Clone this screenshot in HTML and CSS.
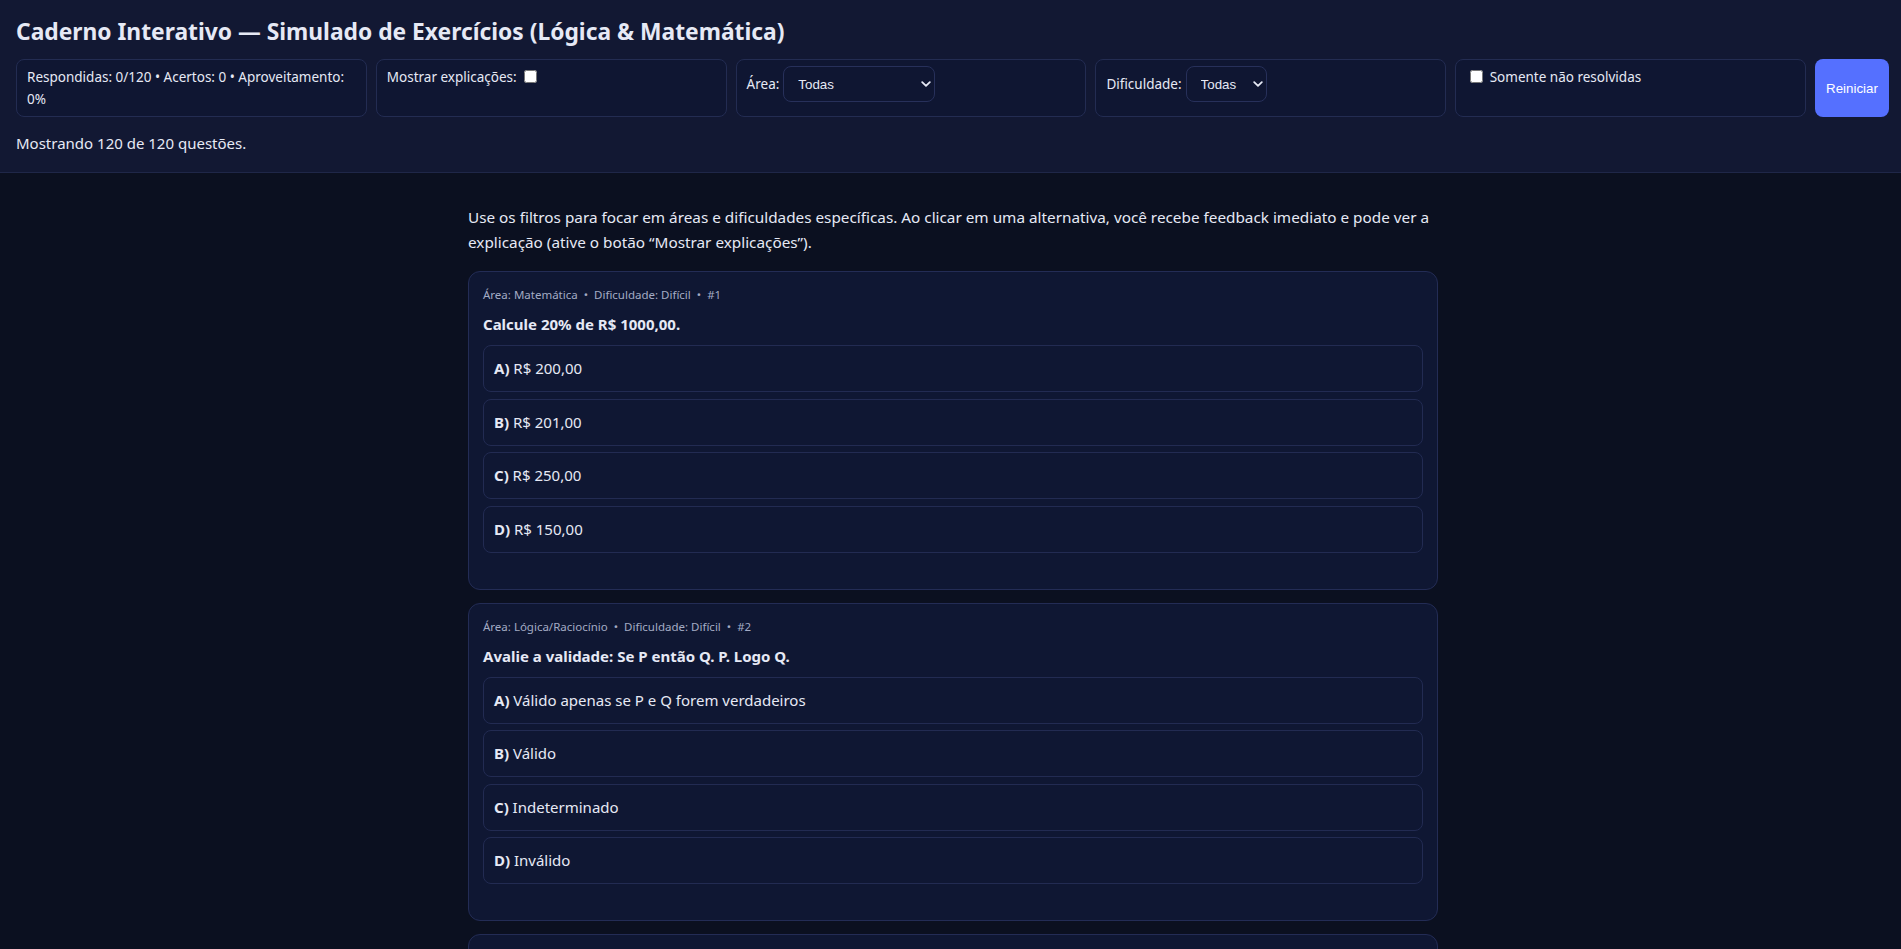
FILE: index.html
```html
<!DOCTYPE html>
<html lang="pt-BR">
<head>
<meta charset="utf-8">
<title>Caderno Interativo</title>
<link rel="stylesheet" href="styles.css">
</head>
<body>
<header class="topbar">
  <h1 class="title">Caderno Interativo — Simulado de Exercícios (Lógica &amp; Matemática)</h1>
  <div class="controls">
    <div class="ctrl">Respondidas: 0/120 • Acertos: 0 • Aproveitamento: 0%</div>
    <label class="ctrl">Mostrar explicações: <input type="checkbox" class="chk"></label>
    <div class="ctrl">
      <div class="field">
        <label for="area">Área:</label>
        <span class="select-wrap">
          <select id="area" class="select sel-area">
            <option>Todas</option>
            <option>Matemática</option>
            <option>Lógica/Raciocínio</option>
          </select>
          <svg class="chev" width="10" height="6" viewBox="0 0 10 6"><path d="M1.2 1.2 L5 4.8 L8.8 1.2" fill="none" stroke="currentColor" stroke-width="1.8" stroke-linecap="round" stroke-linejoin="round"/></svg>
        </span>
      </div>
    </div>
    <div class="ctrl">
      <div class="field">
        <label for="dif">Dificuldade:</label>
        <span class="select-wrap">
          <select id="dif" class="select sel-diff">
            <option>Todas</option>
            <option>Fácil</option>
            <option>Média</option>
            <option>Difícil</option>
          </select>
          <svg class="chev" width="10" height="6" viewBox="0 0 10 6"><path d="M1.2 1.2 L5 4.8 L8.8 1.2" fill="none" stroke="currentColor" stroke-width="1.8" stroke-linecap="round" stroke-linejoin="round"/></svg>
        </span>
      </div>
    </div>
    <label class="ctrl"><input type="checkbox" class="chk chk-first"> Somente não resolvidas</label>
    <button class="reset" type="button">Reiniciar</button>
  </div>
  <div class="count">Mostrando 120 de 120 questões.</div>
</header>

<main class="main">
  <div class="wrap">
    <p class="intro">Use os filtros para focar em áreas e dificuldades específicas. Ao clicar em uma alternativa, você recebe feedback imediato e pode ver a explicação (ative o botão “Mostrar explicações”).</p>

    <section class="card">
      <div class="meta">Área: Matemática<span class="sep">•</span>Dificuldade: Difícil<span class="sep">•</span>#1</div>
      <div class="q">Calcule 20% de R$ 1000,00.</div>
      <div class="opts">
        <div class="opt"><b>A)</b> R$ 200,00</div>
        <div class="opt"><b>B)</b> R$ 201,00</div>
        <div class="opt"><b>C)</b> R$ 250,00</div>
        <div class="opt"><b>D)</b> R$ 150,00</div>
      </div>
      <div class="feedback"></div>
    </section>

    <section class="card">
      <div class="meta">Área: Lógica/Raciocínio<span class="sep">•</span>Dificuldade: Difícil<span class="sep">•</span>#2</div>
      <div class="q">Avalie a validade: Se P então Q. P. Logo Q.</div>
      <div class="opts">
        <div class="opt"><b>A)</b> Válido apenas se P e Q forem verdadeiros</div>
        <div class="opt"><b>B)</b> Válido</div>
        <div class="opt"><b>C)</b> Indeterminado</div>
        <div class="opt"><b>D)</b> Inválido</div>
      </div>
      <div class="feedback"></div>
    </section>

    <section class="card">
      <div class="meta">Área: Matemática<span class="sep">•</span>Dificuldade: Média<span class="sep">•</span>#3</div>
      <div class="q">Qual é o próximo termo da sequência 2, 4, 8, 16, ...?</div>
      <div class="opts">
        <div class="opt"><b>A)</b> 24</div>
        <div class="opt"><b>B)</b> 32</div>
        <div class="opt"><b>C)</b> 30</div>
        <div class="opt"><b>D)</b> 20</div>
      </div>
      <div class="feedback"></div>
    </section>
  </div>
</main>
</body>
</html>
```

FILE: styles.css
```css
* { box-sizing: border-box; }

body {
  margin: 0;
  background: #0b1020;
  color: #e6e9f5;
  font-family: "Noto Sans", "Open Sans", sans-serif;
}

.topbar {
  background: #121833;
  border-bottom: 1px solid #1f2748;
  padding: 18px 12px 17px 16px;
}

.title {
  margin: 0;
  font-size: 22.8px;
  line-height: 28px;
  font-weight: 700;
}

.controls {
  display: grid;
  grid-template-columns: repeat(5, minmax(0, 1fr)) auto;
  gap: 9px;
  margin-top: 13px;
}

.ctrl {
  display: block;
  background: #0f1632;
  border: 1px solid #232c52;
  border-radius: 8px;
  padding: 6px 10px;
  font-size: 13.5px;
  line-height: 22px;
}

.chk {
  width: 13px;
  height: 13px;
  margin: 0 3px 0 4px;
  vertical-align: -1px;
}

.chk-first { margin-left: 4px; }

.field {
  display: flex;
  align-items: center;
  gap: 4px;
}

.select-wrap {
  position: relative;
  display: inline-block;
  color: #e6e9f5;
}

.select {
  -webkit-appearance: none;
  appearance: none;
  height: 36px;
  background: #0f1632;
  color: #e6e9f5;
  border: 1px solid #27305a;
  border-radius: 8px;
  padding: 0 20px 0 14px;
  font-family: "Liberation Sans", Arial, sans-serif;
  font-size: 13.333px;
}

.sel-area { width: 152px; }
.sel-diff { width: 81px; }

.chev {
  position: absolute;
  right: 4px;
  top: 15px;
  pointer-events: none;
}

.reset {
  background: #5570ff;
  color: #ffffff;
  border: 0;
  border-radius: 8px;
  padding: 0 10px;
  width: 74px;
  font-family: "Liberation Sans", Arial, sans-serif;
  font-size: 13.333px;
}

.count {
  margin-top: 14px;
  font-size: 15px;
  line-height: 24px;
}

.main {
  padding: 32px 0 0 5px;
}

.wrap {
  max-width: 970px;
  margin: 0 auto;
}

.intro {
  margin: 0 0 16px;
  font-size: 15.3px;
  line-height: 25px;
}

.card {
  background: #0f1733;
  border: 1px solid #232c55;
  border-radius: 12px;
  padding: 14px;
  margin-bottom: 13px;
}

.meta {
  font-size: 11.5px;
  line-height: 18px;
  color: #a3abc4;
}

.sep {
  margin: 0 6px;
}

.q {
  margin: 8px 0 9px;
  font-size: 15px;
  font-weight: 700;
  line-height: 24px;
}

.opts {
  display: flex;
  flex-direction: column;
  gap: 6.5px;
}

.opt {
  background: #0f1733;
  border: 1px solid #222b52;
  border-radius: 8px;
  padding: 10px;
  font-size: 15px;
  line-height: 25px;
}

.feedback {
  margin-top: 10px;
  height: 12px;
}
```
